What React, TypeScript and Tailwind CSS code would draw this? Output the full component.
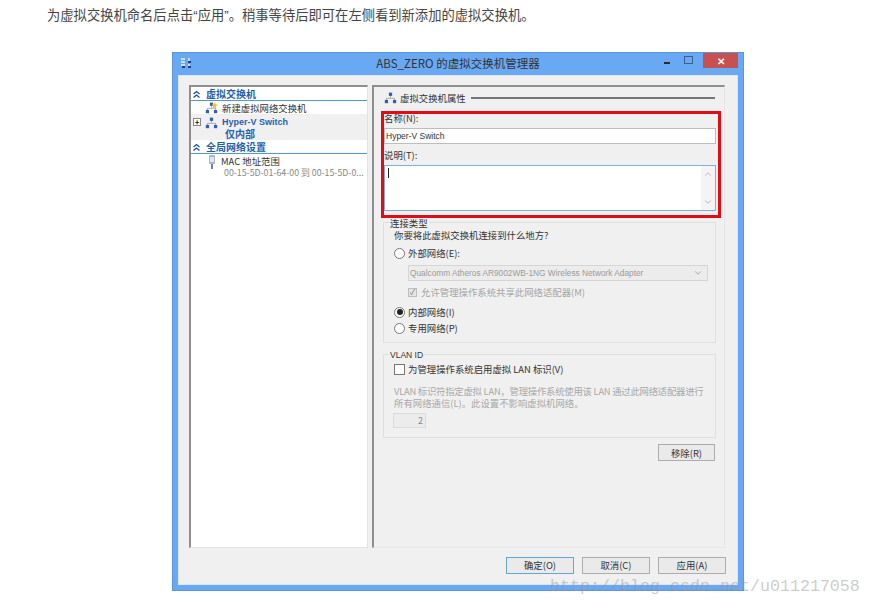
import { ChevronDown, ChevronUp } from "lucide-react";

const FONT = "font-['Noto_Sans_CJK_SC','Liberation_Sans',sans-serif]";

const NetIcon = ({ star = false }: { star?: boolean }) => (
  <svg width="13" height="13" viewBox="0 0 16 16" className="shrink-0">
    <path d="M8 4V8M3 12V9H13V12" fill="none" stroke="#9a9a9a" strokeWidth="1" />
    <rect x="6" y="2" width="4" height="4" fill="#2f5fb3" />
    <rect x="1" y="11" width="4" height="4" fill="#2f5fb3" />
    <rect x="11" y="11" width="4" height="4" fill="#2f5fb3" />
    {star && <path d="M12 1L13 4L16 4.500L13.500 6.500L14 9.500L12 8L9.500 9.500L10 6.500L8 4.500L11 4Z" fill="#f2c230" />}
  </svg>
);

const Chevrons = () => (
  <svg width="9" height="9" viewBox="0 0 9 9" className="shrink-0">
    <path d="M1.500 4L4.500 1.500L7.500 4M1.500 7.500L4.500 5L7.500 7.500" fill="none" stroke="#1b4f9c" strokeWidth="1.300" />
  </svg>
);

const SectionHead = ({ label }: { label: string }) => (
  <div className="flex items-center gap-[5px] h-[14px] pt-[1px] pl-[1px] border-b border-[#4f9ad6] text-[10px] leading-[12px] font-semibold text-[#1f5fae] bg-white">
    <Chevrons />
    <span>{label}</span>
  </div>
);

const Radio = ({ on = false, label }: { on?: boolean; label: string }) => (
  <div className="flex items-center gap-[3px] h-[16px] text-[#333]">
    <span className="w-[11px] h-[11px] rounded-full border border-[#777] bg-white flex items-center justify-center">
      {on && <span className="w-[6px] h-[6px] rounded-full bg-[#222]" />}
    </span>
    <span>{label}</span>
  </div>
);

const Btn = ({ label, primary = false, wide = false }: { label: string; primary?: boolean; wide?: boolean }) => (
  <div
    className={`${wide ? "w-[68px]" : "w-[57px]"} h-[17px] flex items-center justify-center text-[9.400px] text-[#333] bg-[#eaeaea] border ${
      primary ? "border-[#62a5d8]" : "border-[#adadad]"
    }`}
  >
    {label}
  </div>
);

export default function App() {
  return (
    <div className={`relative w-[871px] h-[608px] overflow-hidden bg-white ${FONT}`}>
      <p className="pl-[47px] h-[52px] pt-[7px] text-[13.300px] leading-[17px] text-[#444] font-['Liberation_Sans','Noto_Sans_CJK_SC',sans-serif]">
        为虚拟交换机命名后点击“应用”。稍事等待后即可在左侧看到新添加的虚拟交换机。
      </p>

      <div className="ml-[172px] w-[572px] h-[539px] flex flex-col bg-[#69a8f2] border border-[#5b94d8] px-[5px] pb-[5px]">
        {/* title bar */}
        <div className="relative h-[22px] shrink-0 flex items-center justify-center text-[11.500px] text-[#333]">
          <svg width="14" height="14" viewBox="0 0 14 14" className="absolute left-[2px] top-[3px]">
            <path d="M1 3H5M1 6H5M1 9H5M9 2V5M9 8V11" stroke="#e8f0fb" strokeWidth="1.500" />
            <rect x="8" y="5" width="3" height="2" fill="#23407c" />
            <rect x="2" y="10" width="3" height="2" fill="#23407c" />
            <rect x="8" y="10" width="3" height="2" fill="#23407c" />
          </svg>
          <span>ABS_ZERO 的虚拟交换机管理器</span>
          <div className="absolute right-0 top-0 flex items-start">
            <span className="w-[6px] h-[2px] bg-[#2c2c2c] mt-[9px] mr-[14px]" />
            <span className="w-[9px] h-[8px] border border-[#3b5f8e] mt-[3px] mr-[10px]" />
            <span className="w-[35px] h-[15px] bg-[#c75050] flex items-center justify-center text-white text-[10px] font-bold leading-none">
              ✕
            </span>
          </div>
        </div>

        {/* client area */}
        <div className="flex-1 min-h-0 flex flex-col bg-[#f0f0f0] border border-[#dce6f2] pt-[9px] pl-[10px] pr-[11px]">
          <div className="flex gap-[4px] text-[9.400px] leading-[12px] shrink-0">
            {/* left tree */}
            <div className="w-[179px] h-[463px] shrink-0 bg-white border-t-2 border-l-2 border-r border-b border-t-[#8e8e8e] border-l-[#8e8e8e] border-r-[#e2e2e2] border-b-[#e2e2e2]">
              <SectionHead label="虚拟交换机" />
              <div className="flex items-center h-[13px] pl-[14px] gap-[4px] text-[#333]">
                <NetIcon star />
                <span>新建虚拟网络交换机</span>
              </div>
              <div className="bg-[#f0f0f0] h-[26px] pl-[2px] pt-[2px] font-semibold text-[#2a5fb0]">
                <div className="flex items-center h-[12px]">
                  <span className="w-[8px] h-[8px] mr-[4px] border border-[#888] bg-white flex items-center justify-center text-[8px] leading-none text-[#222]">
                    +
                  </span>
                  <NetIcon />
                  <span className="ml-[4px] text-[9px] font-['Liberation_Sans',sans-serif] font-bold">Hyper-V Switch</span>
                </div>
                <div className="pl-[32px] h-[12px] leading-[12px] text-[10px]">仅内部</div>
              </div>
              <SectionHead label="全局网络设置" />
              <div className="flex pl-[16px] pt-[1px]">
                <svg width="10" height="14" viewBox="0 0 10 14" className="shrink-0">
                  <rect x="2" y="0" width="6" height="9" rx="1" fill="#a9b7c4" />
                  <rect x="3" y="2" width="4" height="5" fill="#dfe7ee" />
                  <path d="M5 9V14" stroke="#6d8396" strokeWidth="2" />
                </svg>
                <div className="ml-[4px] text-[#333]">
                  <div className="h-[12px]">MAC 地址范围</div>
                  <div className="h-[12px] text-[#888] text-[8.800px] ml-[3px] whitespace-nowrap">00-15-5D-01-64-00 到 00-15-5D-0...</div>
                </div>
              </div>
            </div>

            {/* right pane */}
            <div className="w-[353px] h-[463px] border-t-2 border-l-2 border-r border-b border-t-[#8e8e8e] border-l-[#8e8e8e] border-r-[#e6e6e6] border-b-[#e6e6e6] pl-[10px] pr-[8px] text-[#333]">
              <div className="flex items-center h-[21px] gap-[3px]">
                <NetIcon />
                <span>虚拟交换机属性</span>
                <span className="flex-1 h-[2px] ml-[2px] mr-[1px] bg-[#777]" />
              </div>

              <div className="h-[15px] mt-[3px] leading-[15px]">名称(N):</div>
              <div className="h-[16px] mt-[2px] bg-white border border-[#bdbdbd] pl-[1px] text-[8.500px] leading-[14px] font-['Liberation_Sans',sans-serif]">
                Hyper-V Switch
              </div>
              <div className="h-[15px] mt-[4px] leading-[15px]">说明(T):</div>
              <div className="relative h-[46px] mt-[2px] bg-white border border-[#7fb2d6]">
                <span className="absolute left-[3px] top-[2px] w-px h-[10px] bg-[#222]" />
                <div className="absolute right-0 top-0 bottom-0 w-[14px] bg-[#f4f4f4] text-[#aaa] flex flex-col items-center justify-between py-[3px]">
                  <ChevronUp size={10} />
                  <ChevronDown size={10} />
                </div>
              </div>

              {/* connection type */}
              <div className="relative h-[121px] mt-[11px] -ml-[1px] border border-[#dfdfdf] pl-[10px] pr-[7px] pt-[5px]">
                <span className="absolute left-[5px] top-[-6px] px-[1px] bg-[#f0f0f0] leading-[12px]">连接类型</span>
                <div className="h-[14px] leading-[14px]">你要将此虚拟交换机连接到什么地方?</div>
                <div className="mt-[3px]">
                  <Radio label="外部网络(E):" />
                </div>
                <div className="ml-[14px] mt-[4px] h-[16px] border border-[#d5d5d5] bg-[#ececec] flex items-center justify-between pl-[1px] pr-[4px] text-[8.300px] text-[#9a9a9a] font-['Liberation_Sans',sans-serif]">
                  <span>Qualcomm Atheros AR9002WB-1NG Wireless Network Adapter</span>
                  <ChevronDown size={10} />
                </div>
                <div className="flex items-center ml-[14px] mt-[3px] h-[16px] gap-[4px] text-[#a5a5a5]">
                  <span className="w-[9px] h-[9px] border border-[#bdbdbd] bg-[#e5e5e5] text-[8px] leading-[8px] text-[#777] flex items-center justify-center">✓</span>
                  <span>允许管理操作系统共享此网络适配器(M)</span>
                </div>
                <div className="mt-[4px]">
                  <Radio on label="内部网络(I)" />
                </div>
                <Radio label="专用网络(P)" />
              </div>

              {/* vlan */}
              <div className="relative h-[84px] mt-[11px] -ml-[1px] border border-[#dfdfdf] pl-[10px] pt-[6px]">
                <span className="absolute left-[5px] top-[-6px] px-[1px] bg-[#f0f0f0] text-[8.500px] leading-[12px] font-['Liberation_Sans',sans-serif]">VLAN ID</span>
                <div className="flex items-center h-[16px] gap-[3px]">
                  <span className="w-[11px] h-[11px] border border-[#777] bg-white" />
                  <span>为管理操作系统启用虚拟 LAN 标识(V)</span>
                </div>
                <div className="mt-[9px] text-[#a8a8a8] leading-[11.500px] whitespace-nowrap">
                  <div className="tracking-[-0.250px]">VLAN 标识符指定虚拟 LAN，管理操作系统使用该 LAN 通过此网络适配器进行</div>
                  <div>所有网络通信(L)。此设置不影响虚拟机网络。</div>
                </div>
                <div className="mt-[4px] -ml-[1px] w-[33px] h-[15px] border border-[#dcdcdc] bg-[#ececec] text-right pr-[2px] text-[9px] leading-[13px] text-[#888]">2</div>
              </div>

              <div className="flex justify-end mt-[6px] pr-[1px]">
                <Btn label="移除(R)" />
              </div>
            </div>
          </div>

          {/* footer buttons */}
          <div className="flex justify-end gap-[8px] pt-[9px] shrink-0">
            <Btn wide primary label="确定(O)" />
            <Btn wide label="取消(C)" />
            <Btn wide label="应用(A)" />
          </div>
        </div>
      </div>

      {/* red highlight */}
      <div className="absolute left-[381px] top-[111px] w-[340px] h-[107px] border-[3px] border-[#e00c18]" />

      {/* watermark */}
      <div className="absolute left-[550px] top-[576px] text-[16.670px] leading-[22px] text-[#9a9a9a]/50 font-['Liberation_Mono',monospace] whitespace-nowrap">
        http://blog.csdn.net/u011217058
      </div>
    </div>
  );
}
